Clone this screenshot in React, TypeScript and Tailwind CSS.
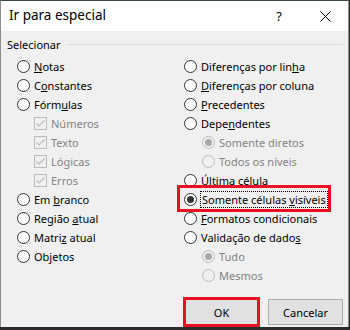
import { ReactNode } from "react";

type RadioProps = { label: ReactNode; checked?: boolean; disabled?: boolean };

const Radio = ( { label, checked, disabled }: RadioProps ) => (
  <div className="flex items-center h-[19px]">
    <span
      className={ disabled
        ? "w-[13px] h-[13px] rounded-full border border-[#bcbcbc] bg-[#f0f0f0] flex items-center justify-center shrink-0"
        : "w-[13px] h-[13px] rounded-full border border-[#333] bg-white flex items-center justify-center shrink-0" }
    >
      { checked && (
        <span className={ disabled ? "w-[7px] h-[7px] rounded-full bg-[#a8a8a8]" : "w-[7px] h-[7px] rounded-full bg-[#333]" } />
      ) }
    </span>
    <span className={ disabled ? "ml-[4px] text-[#838383]" : "ml-[4px] text-black" }>{ label }</span>
  </div>
);

const Check = ( { label }: { label: string } ) => (
  <div className="flex items-center h-[19px]">
    <span className="w-[13px] h-[13px] border border-[#bcbcbc] bg-[#f0f0f0] flex items-center justify-center shrink-0">
      <svg width="11" height="11" viewBox="0 0 11 11">
        <path d="M1.5 5.5 L4 8 L9.5 2.5" fill="none" stroke="#bcbcbc" strokeWidth="1.2" />
      </svg>
    </span>
    <span className="ml-[4px] text-[#838383]">{ label }</span>
  </div>
);

export default function App () {
  return (
    <div className="w-[350px] h-[330px] bg-[#2b2b2b] text-[11px] leading-none" style={ { fontFamily: "'Noto Sans', sans-serif" } }>
      <div className="h-[327px] flex flex-col border-t border-t-[#3a4844] border-l border-l-[#8c8c8c] border-r border-r-[#8c8c8c] mr-[1px]">

        {/* barra de título */}
        <div className="h-[30px] bg-white flex items-center pl-[8px]">
          <span className="text-[13.5px] text-black">Ir para especial</span>
          <span className="ml-auto mr-[38px] text-[13px] text-black">?</span>
          <svg width="11" height="11" viewBox="0 0 11 11" className="mr-[17px]">
            <path d="M0.5 0.5 L10.5 10.5 M10.5 0.5 L0.5 10.5" stroke="#000" strokeWidth="1" />
          </svg>
        </div>

        <div className="flex-1 bg-[#f0f0f0] flex flex-col">
          <div className="flex items-center h-[14px] mt-[6px] pl-[6px] pr-[5px]">
            <span className="text-black">Selecionar</span>
            <span className="flex-1 h-px bg-[#dcdcdc] ml-[6px]" />
          </div>

          <div className="flex mt-[6px]">
            <div className="w-[183px] pl-[16px]">
              <Radio label={ <><u>N</u>otas</> } />
              <Radio label={ <>C<u>o</u>nstantes</> } />
              <Radio label={ <>Fórm<u>u</u>las</> } />
              <div className="pl-[17px]">
                <Check label="Números" />
                <Check label="Texto" />
                <Check label="Lógicas" />
                <Check label="Erros" />
              </div>
              <Radio label={ <>Em <u>b</u>ranco</> } />
              <Radio label={ <>Região <u>a</u>tual</> } />
              <Radio label={ <>Matri<u>z</u> atual</> } />
              <Radio label={ <>Ob<u>j</u>etos</> } />
            </div>

            <div className="flex-1">
              <Radio label={ <>Diferenças por lin<u>h</u>a</> } />
              <Radio label={ <><u>D</u>iferenças por coluna</> } />
              <Radio label={ <><u>P</u>recedentes</> } />
              <Radio label={ <>Depe<u>n</u>dentes</> } />
              <div className="pl-[18px]">
                <Radio label="Somente diretos" checked disabled />
                <Radio label="Todos os níveis" disabled />
              </div>
              <Radio label={ <><u>Ú</u>ltima célula</> } />
              <div className="relative">
                <Radio label={ <span className="px-[1px] outline outline-1 outline-dotted outline-black">Somente células <u>v</u>isíveis</span> } checked />
                <span className="absolute left-[-7px] top-[-5px] w-[154px] h-[27px] border-[3px] border-[#e81123]" />
              </div>
              <Radio label={ <><u>F</u>ormatos condicionais</> } />
              <Radio label={ <>Validação de dado<u>s</u></> } />
              <div className="pl-[18px]">
                <Radio label="Tudo" checked disabled />
                <Radio label="Mesmos" disabled />
              </div>
            </div>
          </div>

          <div className="flex justify-end items-start gap-[8px] mt-[12px] pr-[5px]">
            <button className="w-[77px] h-[30px] bg-[#e1e1e1] border-[3px] border-[#e81123] text-black">OK</button>
            <button className="w-[75px] h-[26px] mt-[2px] bg-[#e1e1e1] border border-[#adadad] text-black">Cancelar</button>
          </div>
        </div>
      </div>
    </div>
  );
}
